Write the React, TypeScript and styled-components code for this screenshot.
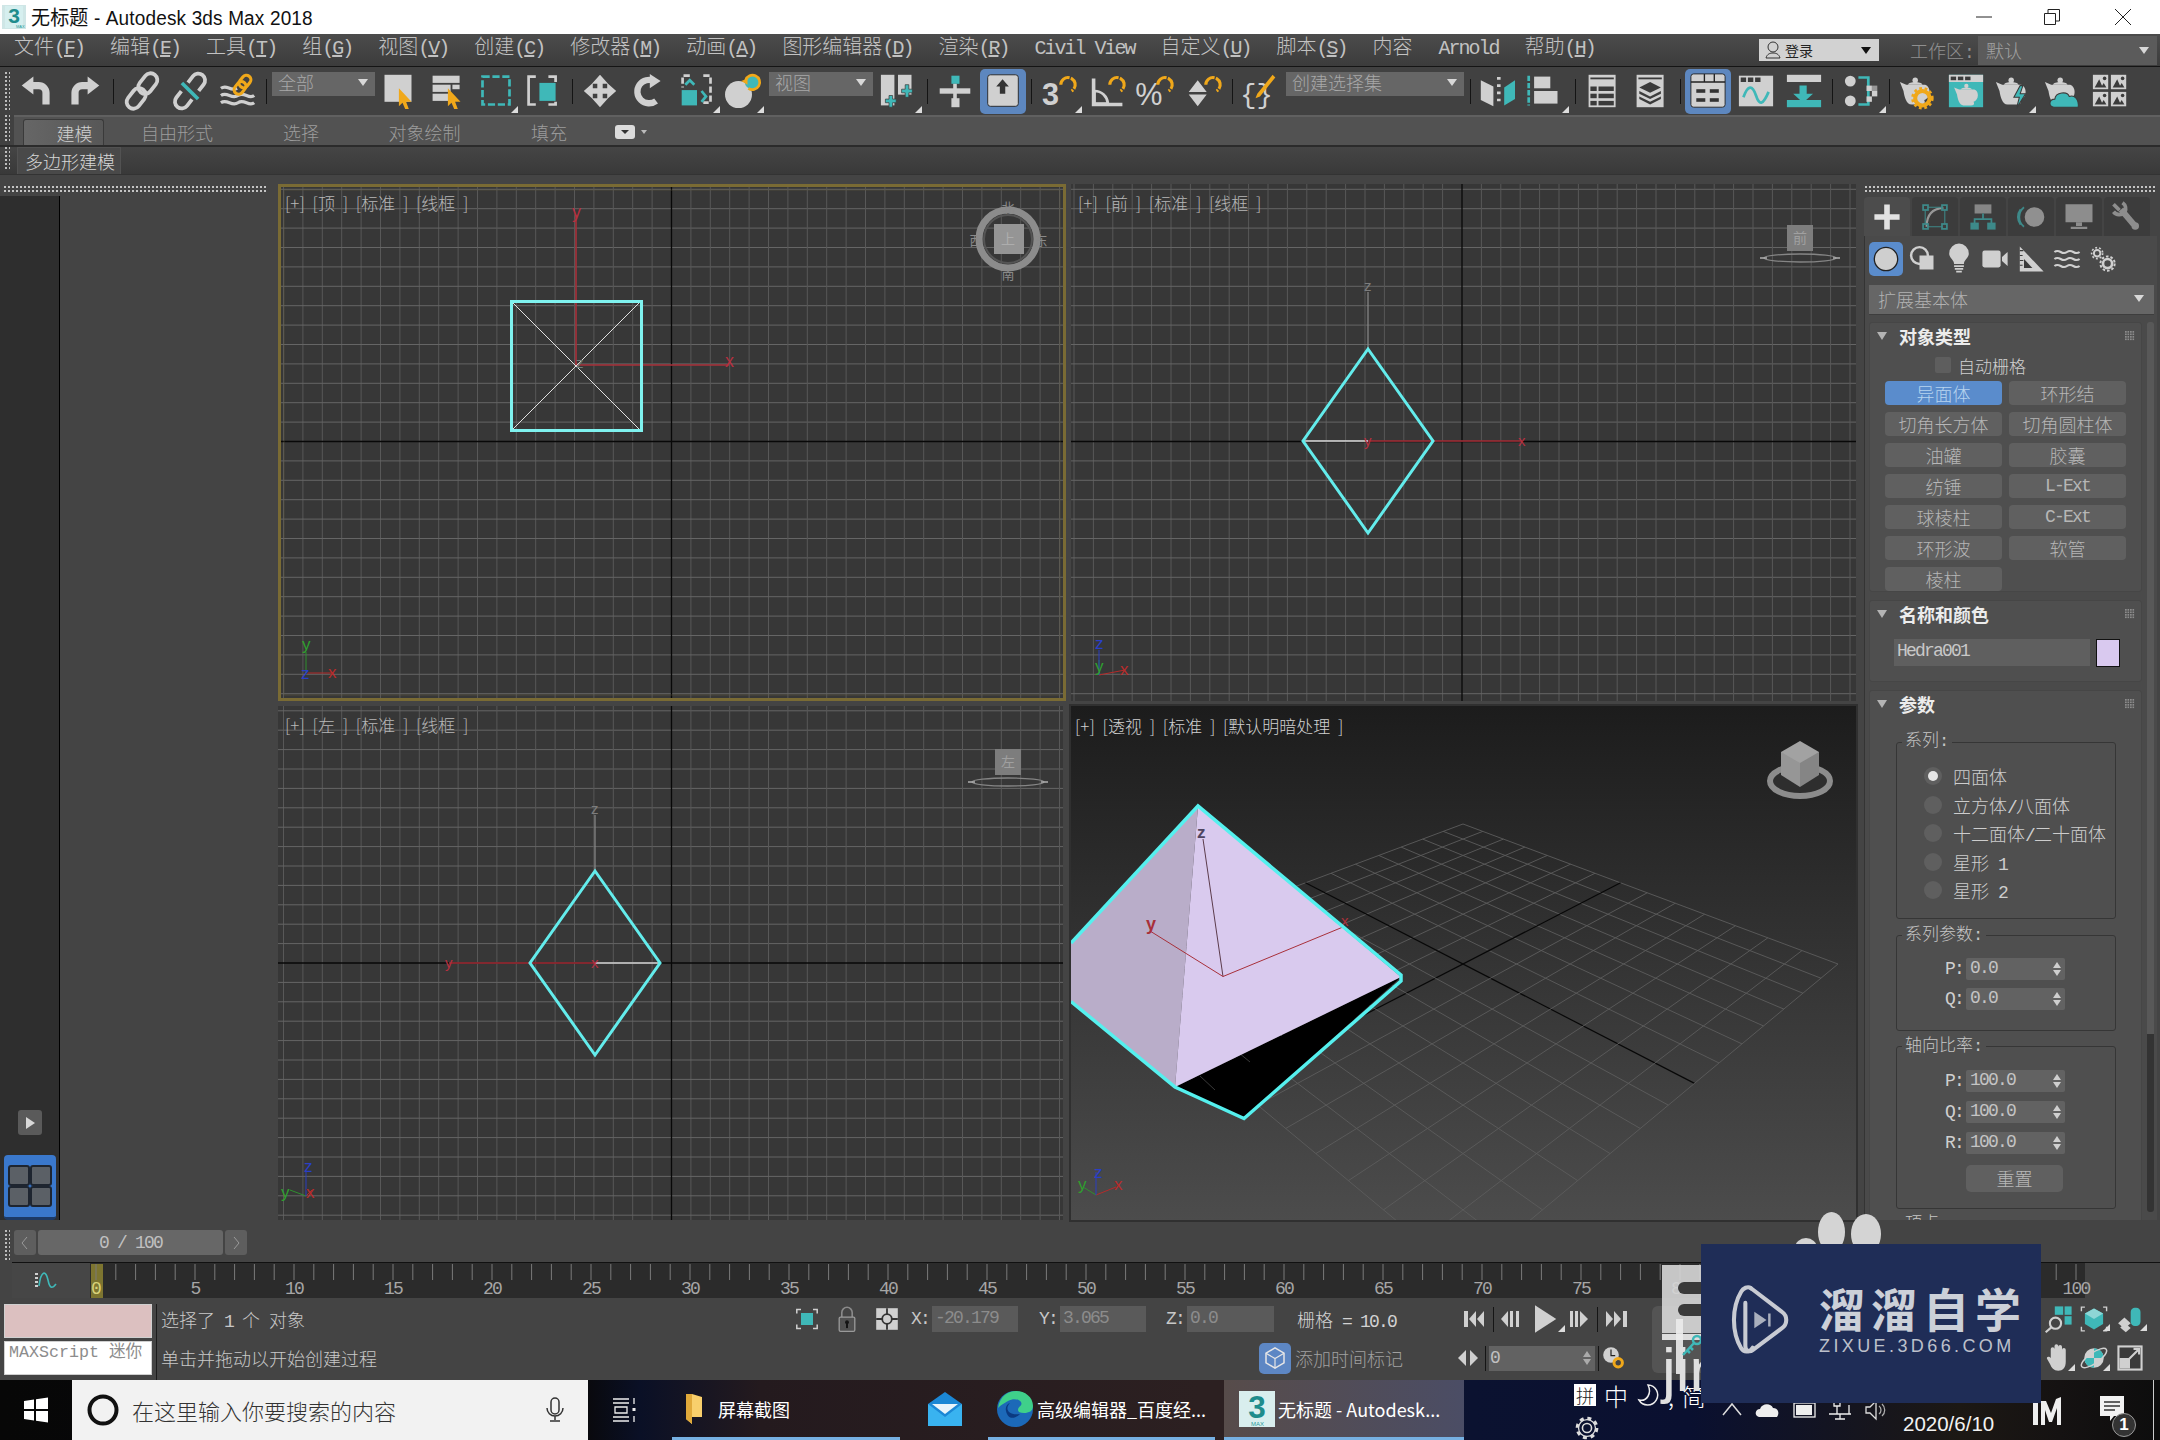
import React from 'react';
import styled, { createGlobalStyle } from 'styled-components';

const MONO = `"Liberation Mono","Noto Sans CJK SC",monospace`;
const CJK = `"Noto Sans CJK SC","Liberation Sans",sans-serif`;
const L = '#d0d0d0';
const T = '#3fb8b8';
const O = '#f0a81a';
const D = '#3b3b3b';

const Global = createGlobalStyle`
  html, body { margin: 0; padding: 0; background: #444; }
  body { font-family: ${MONO}; width: 2160px; height: 1440px; overflow: hidden; }
  * { box-sizing: border-box; }
  svg { overflow: visible; display: block; }
`;

const App_ = styled.div`position: relative; width: 2160px; height: 1440px; display: flex; flex-direction: column; background: #444; overflow: hidden;`;
const Lat = styled.span`font-family: "Liberation Mono", monospace; letter-spacing: -.1em; white-space: pre;`;

/* ---------- title ---------- */
const TitleBar = styled.header`height: 34px; background: #fff; display: flex; align-items: center; padding-left: 2px;`;
const TitleText = styled.div`margin: -3px 0 0 5px; font: 19px ${`"Liberation Sans","Noto Sans CJK SC",sans-serif`}; letter-spacing: .15px; color: #111; flex: 1; transform: scaleY(1.08);`;
const WinBtn = styled.div<{ $w: number }>`width: ${p => p.$w}px; display: flex; justify-content: center;`;
const WinBtns = styled.div`display: flex;`;

/* ---------- menu ---------- */
const MenuBar = styled.nav`height: 33px; border-bottom: 1px solid #151515; background: linear-gradient(#4c4c4c, #3c3c3c); display: flex; align-items: center; padding-left: 14px; gap: 26px; font-size: 20px; color: #c2c2c2;`;
const MenuItem = styled.span`white-space: nowrap; font-weight: 300; line-height: 30px; margin-top: -3px;`;
const MenuRight = styled.div`margin-left: auto; display: flex; align-items: center; height: 32px; padding-right: 3px;`;
const Login = styled.div`width: 120px; height: 22px; background: #d2d2d2; display: flex; align-items: center; padding: 0 8px 0 4px; gap: 2px; font: 14px ${CJK}; color: #222; margin-right: 31px;`;
const Arrow = styled.i<{ $c?: string; $s?: number }>`display: block; width: 0; height: 0; margin-left: auto; border-left: ${p => p.$s ?? 5}px solid transparent; border-right: ${p => p.$s ?? 5}px solid transparent; border-top: ${p => (p.$s ?? 5) * 1.4}px solid ${p => p.$c ?? '#d8d8d8'};`;
const WsLabel = styled.span`font-size: 18px; font-weight: 300; color: #8f8f8f; margin-right: 5px; white-space: nowrap;`;
const WsBox = styled.div`width: 179px; height: 29px; background: #5b5b5b; display: flex; align-items: center; padding: 0 8px; font-size: 18px; font-weight: 300; color: #a2a2a2;`;

/* ---------- toolbar ---------- */
const Toolbar = styled.div`height: 48px; background: #414141; display: flex; align-items: center; position: relative;`;
const VGrip = styled.div<{ $h?: number }>`width: 5px; flex: 0 0 5px; height: ${p => p.$h ?? 38}px; margin: 0 4px 0 5px; background-image: radial-gradient(circle at 1px 1px, #bdbdbd 1px, transparent 1.3px); background-size: 4px 4px;`;
const Tool = styled.div<{ $w: number }>`position: relative; flex: 0 0 ${p => p.$w}px; width: ${p => p.$w}px; height: 48px; display: flex; align-items: center; justify-content: center;`;
const ActiveFrame = styled.div`width: 46px; height: 45px; background: #5d87bf; border-radius: 5px; display: flex; align-items: center; justify-content: center;`;
const Fly = styled.i`position: absolute; right: 1px; bottom: 2px; width: 0; height: 0; border-bottom: 7px solid #dcdcdc; border-left: 7px solid transparent;`;
const TSep = styled.div<{ $w: number }>`flex: 0 0 ${p => p.$w}px; width: ${p => p.$w}px; display: flex; justify-content: center; &::after { content: ''; width: 1px; height: 25px; background: #141414; }`;
const Drop = styled.div<{ $w: number; $ml?: number }>`flex: 0 0 ${p => p.$w}px; width: ${p => p.$w}px; margin-left: ${p => p.$ml ?? 0}px; height: 24px; align-self: flex-start; margin-top: 5px; background: #666; display: flex; align-items: center; padding: 0 7px 4px 6px; color: #a8a8a8; font-size: 18px; font-weight: 300;`;

/* ---------- ribbon ---------- */
const Ribbon = styled.div`height: 32px; display: flex; background: #414141; border-bottom: 2px solid #2b2b2b;`;
const RibbonTabs = styled.div`flex: 1; height: 30px; background: #525252; border-top: 2px solid #606060; display: flex; position: relative; padding-left: 9px; font-size: 18px; color: #9c9c9c; font-weight: 300;`;
const RTab = styled.div<{ $w: number; $active?: boolean }>`flex: 0 0 ${p => p.$w}px; height: 26px; margin-top: 2px; display: flex; align-items: center; justify-content: center; gap: 6px; ${p => p.$active ? 'background: linear-gradient(90deg,#666,#575757); border-radius: 3px 3px 0 0; color:#cfcfcf; border:1px solid #3a3a3a; border-bottom:0; padding-left: 22px;' : ''}`;
const SubRibbon = styled.div`height: 28px; display: flex; background: linear-gradient(#454545, #393939); border-bottom: 1px solid #333;`;
const SubTab = styled.div`width: 104px; margin-left: 3px; height: 27px; background: #494949; border: 1px solid #525252; border-bottom: 0; color: #d6d6d6; font-size: 18px; font-weight: 300; display: flex; align-items: center; padding-left: 7px; white-space: nowrap;`;

/* ---------- middle ---------- */
const Middle = styled.main`height: 1050px; display: flex; background: #444;`;
const LeftCol = styled.div`width: 278px; flex: 0 0 278px; padding-top: 11px; display: flex; flex-direction: column;`;
const HGrip = styled.div<{ $ml: number; $w: number }>`margin-left: ${p => p.$ml}px; width: ${p => p.$w}px; height: 6px; flex: 0 0 6px; background-image: radial-gradient(circle at 1px 1px, #c4c4c4 1px, transparent 1.3px); background-size: 4px 4px;`;
const Strip = styled.div`margin-top: 4px; width: 60px; flex: 1; margin-bottom: 5px; background: #2e2e2e; border-right: 1px solid #000; display: flex; flex-direction: column; align-items: center; justify-content: flex-end;`;
const PlayBtn = styled.div`width: 24px; height: 25px; background: #5a5a5a; border-radius: 3px; display: flex; align-items: center; justify-content: center; margin-bottom: 20px;`;
const LayoutBtn = styled.div`width: 52px; height: 65px; border-radius: 4px; background: #3a78cc; border-bottom: 3px solid #1d3a66; display: flex; align-items: center; justify-content: center;`;

const VGrid = styled.div`width: 1582px; flex: 0 0 1582px; padding-top: 9px; display: grid; grid-template-columns: 788px 785px; grid-template-rows: 517px 514px; column-gap: 5px; row-gap: 5px;`;
const ViewBox = styled.section<{ $bg?: string; $mr?: number; $edge?: boolean }>`position: relative; overflow: hidden; margin-right: ${p => p.$mr ?? 0}px; background: ${p => p.$bg ?? '#373737'}; ${p => p.$edge ? 'outline: 2px solid #303030;' : ''}`;
const ViewLabel = styled.div<{ $b?: boolean }>`position: absolute; left: ${p => p.$b ? 4 : 7}px; top: ${p => p.$b ? 7 : 6}px; font: 300 17px ${CJK}; color: ${p => p.$b ? '#d0d0d0' : '#b8b8b8'}; white-space: pre; word-spacing: 4px;`;
const VSvg = styled.svg`position: absolute; inset: 0; width: 100%; height: 100%; overflow: hidden;`;

/* ---------- command panel ---------- */
const Panel = styled.aside`width: 300px; flex: 0 0 300px; padding-top: 11px; display: flex; flex-direction: column;`;
const PTabs = styled.div`margin: 5px 0 0 4px; display: flex; gap: 2px; height: 39px;`;
const PTab = styled.div<{ $active?: boolean }>`width: 46px; height: 39px; border-radius: 4px 4px 0 0; background: ${p => p.$active ? '#4c4c4c' : '#3c3c3c'}; display: flex; align-items: center; justify-content: center; svg { opacity: ${p => p.$active ? 1 : .62}; }`;
const PBody = styled.div`margin-left: 4px; width: 293px; height: 984px; background: #4a4a4a; border-left: 1px solid #343434; padding-left: 4px; overflow: hidden; display: flex; flex-direction: column;`;
const SubIcons = styled.div`height: 46px; flex: 0 0 46px; display: flex; align-items: center; padding-bottom: 1px;`;
const SubIcon = styled.div<{ $active?: boolean }>`width: 36px; height: 34px; flex: 0 0 36px; display: flex; align-items: center; justify-content: center; ${p => p.$active ? 'background:#5a8ccc;border-radius:5px;width:34px;flex:0 0 34px;margin-right:2px;' : ''}`;
const Combo = styled.div`width: 285px; height: 30px; margin-top: 3px; flex: 0 0 30px; background: #666; display: flex; align-items: center; padding: 0 10px 2px 9px; color: #b2b2b2; font-size: 18px; font-weight: 300; border-bottom: 1px solid #3e3e3e;`;
const Scroller = styled.div`margin-top: 7px; flex: 1; display: flex; overflow: hidden;`;
const Rollouts = styled.div`width: 273px; flex: 0 0 273px; display: flex; flex-direction: column; gap: 8px;`;
const Track = styled.div`margin-left: 5px; width: 7px; height: 890px; border-radius: 3px; background: linear-gradient(#585858 0, #585858 80%, #333 80%, #333 100%);`;
const Rollout = styled.div<{ $pb: number }>`background: #4f4f4f; border: 1px solid #464646; border-radius: 3px; padding-bottom: ${p => p.$pb}px;`;
const RollHead = styled.div`height: 26px; display: flex; align-items: center; padding: 0 6px 0 7px; color: #ececec; font-size: 18px; font-weight: 700;`;
const RollTri = styled.i`width: 0; height: 0; border-left: 5px solid transparent; border-right: 5px solid transparent; border-top: 8px solid #b4b4b4; margin-right: 12px;`;
const RollDots = styled.i`margin-left: auto; width: 10px; height: 10px; background-image: radial-gradient(circle at 1px 1px, #8c8c8c .9px, transparent 1.1px); background-size: 2.5px 2.5px;`;
const AutoRow = styled.div`height: 20px; margin: 6px 0 6px 65px; display: flex; align-items: center; gap: 7px; font-size: 17px; font-weight: 300; color: #cfcfcf;`;
const CheckBox = styled.i`width: 16px; height: 16px; border-radius: 2px; background: #5e5e5e;`;
const BtnGrid = styled.div`display: grid; grid-template-columns: 117px 117px; gap: 7px; padding-left: 15px;`;
const PBtn = styled.div<{ $on?: boolean }>`height: 24px; border-radius: 4px; background: ${p => p.$on ? '#5a8ccc' : '#606060'}; color: ${p => p.$on ? '#b7d4ef' : '#b6b6b6'}; display: flex; align-items: center; justify-content: center; font-size: 18px; font-weight: 300; white-space: nowrap;`;
const NameRow = styled.div`display: flex; padding: 12px 0 0 24px; gap: 6px;`;
const NameInput = styled.div`width: 196px; height: 27px; background: #5f5f5f; color: #c8c8c8; font-size: 18px; letter-spacing: -1.8px; padding-left: 3px; line-height: 25px;`;
const Swatch = styled.div`width: 24px; height: 28px; background: #d9c9ef; border: 1px solid #111;`;
const Group = styled.fieldset<{ $mt: number; $pt: number; $pb: number }>`margin: ${p => p.$mt}px 0 0 26px; width: 220px; padding: ${p => p.$pt}px 0 ${p => p.$pb}px 0; border: 1px solid #363636; border-radius: 3px; min-width: 0;`;
const Legend = styled.legend`margin-left: 5px; padding: 0 3px; height: 20px; line-height: 20px; font-size: 17px; font-weight: 300; color: #c6c6c6; white-space: nowrap;`;
const RadioRow = styled.div`height: 28.5px; display: flex; align-items: center; padding-left: 27px; font-size: 18px; font-weight: 300; color: #cdcdcd; gap: 11px; white-space: nowrap;`;
const RadioLabel = styled.span`white-space: pre;`;
const Radio = styled.i<{ $on?: boolean }>`width: 18px; height: 18px; border-radius: 50%; background: #5f5f5f; display: flex; align-items: center; justify-content: center; flex: 0 0 18px; &::after { content: ''; width: 10px; height: 10px; border-radius: 50%; background: ${p => p.$on ? '#e6e6e6' : 'transparent'}; }`;
const SpinRow = styled.div<{ $mt?: number }>`height: 22px; margin-top: ${p => p.$mt ?? 0}px; display: flex; align-items: center; padding-left: 48px;`;
const SpinLabel = styled.span`width: 21px; font-size: 18px; letter-spacing: -1.8px; color: #cfcfcf;`;
const Spinner = styled.div`width: 99px; height: 22px; background: #626262; border-radius: 2px; color: #c4c4c4; font-size: 18px; letter-spacing: -1.8px; display: flex; align-items: center; padding: 0 4px 2px 4px;`;
const SpinArrows = styled.span`margin-left: auto; display: flex; flex-direction: column; gap: 2px; padding-top: 2px;`;
const Up = styled.i<{ $c?: string }>`display: block; width: 0; height: 0; border-left: 4px solid transparent; border-right: 4px solid transparent; border-bottom: 6px solid ${p => p.$c ?? '#cfcfcf'};`;
const Down = styled.i<{ $c?: string }>`display: block; width: 0; height: 0; border-left: 4px solid transparent; border-right: 4px solid transparent; border-top: 6px solid ${p => p.$c ?? '#cfcfcf'};`;
const ResetBtn = styled.div`margin: 11px 0 0 69px; width: 97px; height: 27px; border-radius: 5px; background: #606060; color: #b8b8b8; display: flex; align-items: center; justify-content: center; font-size: 18px; font-weight: 300;`;

/* ---------- time ---------- */
const TimeRow = styled.div`height: 37px; display: flex; align-items: flex-start; padding-top: 5px;`;
const TBtn = styled.div`width: 22px; height: 25px; background: #5e5e5e; border-radius: 3px; display: flex; align-items: center; justify-content: center;`;
const TField = styled.div`width: 185px; height: 25px; margin: 0 2px 0 2px; background: #676767; border-radius: 3px; display: flex; align-items: center; justify-content: center; color: #c0c0c0; font-size: 18px; letter-spacing: -1.8px; white-space: pre;`;
const TrackRow = styled.div`height: 36px; display: flex; border-top: 1px solid #111; margin-left: 12px;`;
const TrackLeft = styled.div`width: 78px; flex: 0 0 78px; background: #464646; display: flex; align-items: center; padding-left: 22px;`;
const TrackRuler = styled.div`width: 1995px; flex: 0 0 1995px; background: #2b2b2b; height: 35px; position: relative;`;

/* ---------- status ---------- */
const Status = styled.div`height: 82px; display: flex; background: #444; padding: 6px 0 0 4px;`;
const Prompt = styled.div`width: 148px; height: 71px; display: flex; flex-direction: column; gap: 3px;`;
const PromptPink = styled.div`height: 34px; background: #dcc0c0; border: 1px solid #cfcfcf;`;
const PromptWhite = styled.div`height: 34px; background: #fff; border: 1px solid #cfcfcf; color: #8c8c8c; font-size: 16.67px; line-height: 22px; padding: 0 4px; white-space: nowrap; overflow: hidden;`;
const StatDiv = styled.div`width: 1px; height: 76px; background: #1c1c1c; margin: 0 4px;`;
const StatRows = styled.div`flex: 1; display: flex; flex-direction: column; margin-top: -6px;`;
const StatRow = styled.div<{ $h: number }>`height: ${p => p.$h}px; display: flex; align-items: center; padding-right: 12px;`;
const Msg = styled.div<{ $w: number }>`flex: 0 0 ${p => p.$w}px; font-size: 18px; font-weight: 300; color: #c8c8c8; white-space: pre;`;
const Slot = styled.div<{ $w: number }>`flex: 0 0 ${p => p.$w}px; width: ${p => p.$w}px; display: flex; align-items: center; justify-content: center; position: relative;`;
const CLabel = styled.span<{ $ml?: number }>`flex: 0 0 21px; margin-left: ${p => p.$ml ?? 0}px; font-size: 18px; letter-spacing: -1.8px; color: #c8c8c8;`;
const CField = styled.div<{ $w?: number }>`flex: 0 0 ${p => p.$w ?? 86}px; height: 26px; background: #5a5a5a; color: #8c8c8c; font-size: 18px; letter-spacing: -1.8px; padding: 2px 3px; line-height: 20px;`;
const GridText = styled.div`flex: 0 0 165px; margin-left: 23px; font-size: 18px; font-weight: 300; color: #d2d2d2; white-space: pre;`;
const VBar = styled.i`display: block; width: 1px; height: 25px; background: #151515;`;
const TagIcon = styled.div`flex: 0 0 32px; height: 31px; background: #5d87c4; border-radius: 5px; display: flex; align-items: center; justify-content: center;`;
const TagText = styled.div`flex: 0 0 166px; padding-left: 4px; font-size: 18px; font-weight: 300; color: #a0a0a0; white-space: nowrap;`;
const FrameField = styled.div`flex: 0 0 106px; height: 25px; background: #626262; display: flex; align-items: center; color: #c0c0c0; font-size: 18px; padding: 0 4px 0 1px;`;
const NavSlots = styled.div`margin-left: auto; display: flex;`;

/* ---------- taskbar ---------- */
const Taskbar = styled.footer`height: 60px; display: flex; position: relative; color: #fff; font-family: ${CJK}; background: linear-gradient(90deg,#070707 0,#09090d 588px,#0a1026 640px,#241a1e 760px,#2c2021 1200px,#2c2021 1224px,#0b1230 1470px,#0a1030 1690px,#1c1814 1960px,#151212 2060px,#0d0d0d 2160px);`;
const StartBtn = styled.div`flex: 0 0 72px; display: flex; align-items: center; justify-content: center;`;
const Search = styled.div`flex: 0 0 516px; background: #f2f2f2; display: flex; align-items: center; padding: 0 20px 0 14px; gap: 12px; color: #333; font-size: 22px; font-weight: 300;`;
const SearchText = styled.span`flex: 1; white-space: nowrap;`;
const TaskView = styled.div`flex: 0 0 72px; display: flex; align-items: center; justify-content: center;`;
const TaskTab = styled.div<{ $w: number; $ml?: number; $pl?: number; $on?: boolean }>`flex: 0 0 ${p => p.$w}px; margin-left: ${p => p.$ml ?? 0}px; border-bottom: 3px solid #76b0e2; display: flex; align-items: center; gap: 3px; padding-left: ${p => p.$pl ?? 8}px; font-size: 18px; white-space: nowrap; ${p => p.$on ? 'background: linear-gradient(90deg,#574c4a,#4b4d65);' : ''}`;
const MailSlot = styled.div`flex: 0 0 80px; margin-left: 5px; display: flex; align-items: center; justify-content: center;`;
const Ime = styled.div`position: relative; margin-left: 110px; flex: 0 0 145px; display: flex; flex-direction: column; padding-top: 4px;`;
const ImeTop = styled.div`display: flex; align-items: center; gap: 8px; height: 22px; font-size: 24px; font-weight: 300;`;
const ImePin = styled.span`width: 22px; height: 22px; background: #fff; color: #222; font-size: 18px; line-height: 22px; text-align: center;`;
const ImeGear = styled.div`margin-top: 9px;`;
const TrayIcons = styled.div`flex: 0 0 174px; display: flex; align-items: center; margin-left: -5px;`;
const TrayIcon = styled.div`flex: 0 0 36px; display: flex; justify-content: center;`;
const DateText = styled.div`flex: 0 0 118px; font: 20.5px "Liberation Sans", sans-serif; color: #f2f2f2; padding-top: 32px; margin-left: 9px;`;
const ImLogo = styled.div`flex: 0 0 52px; margin-left: 11px; display: flex; align-items: center; padding-top: 4px;`;
const Notify = styled.div`flex: 0 0 50px; margin-left: 14px; display: flex; align-items: center; position: relative;`;
const NotifyBadge = styled.span`position: absolute; left: 14px; top: 33px; width: 24px; height: 24px; border-radius: 50%; background: #333; border: 1px solid #999; font: bold 17px "Liberation Sans", sans-serif; display: flex; align-items: center; justify-content: center;`;
const EdgeLine = styled.i`position: absolute; right: 6px; top: 0; bottom: 0; width: 1px; background: #ccc;`;

/* ---------- watermark ---------- */
const Mark = styled.div`position: absolute; left: 1701px; top: 1244px; width: 340px; height: 159px; background: #1f2d57; display: flex; align-items: center; padding: 0 0 8px 24px; gap: 24px; z-index: 5;`;
const MarkText = styled.div`display: flex; flex-direction: column; color: #ccd0d8;`;
const MarkCn = styled.div`font: 700 46px/50px ${CJK}; letter-spacing: 6px; white-space: nowrap;`;
const MarkEn = styled.div`font: 18px/24px "Liberation Sans", sans-serif; letter-spacing: 3.4px; margin-top: 2px; color: #bcc0cb;`;
const Ghost = styled.div`position: absolute; left: 1652px; top: 1306px; width: 60px; height: 67px; border-radius: 6px; background: rgba(255,255,255,.09); z-index: 2;`;
const GhostB = styled.div`position: absolute; left: 1662px; top: 1265px; width: 50px; height: 68px; background: rgba(215,215,215,.9); z-index: 3; display: flex; flex-direction: column; justify-content: space-around; align-items: flex-end; padding: 12px 0;`;
const GhostHole = styled.i`display: block; width: 34px; height: 12px; border-radius: 6px 0 0 6px; background: #3a3a3a;`;
const GhostBar = styled.i`position: absolute; left: 1676px; top: 1319px; width: 7px; height: 55px; background: rgba(235,235,235,.9); z-index: 3;`;
const GhostCross = styled.i`position: absolute; left: 1662px; top: 1334px; width: 50px; height: 6px; background: rgba(235,235,235,.9); z-index: 3;`;
const GhostJin = styled.div`position: absolute; left: 1662px; top: 1335px; z-index: 4; font: 300 62px/70px "Liberation Sans", sans-serif; color: #e0e0e0;`;
const GhostKey = styled.div`position: absolute; left: 1680px; top: 1335px; z-index: 4;`;
const Paw = styled.i<{ $x: number; $y: number; $w: number; $h: number }>`position: absolute; left: ${p => p.$x}px; top: ${p => p.$y}px; width: ${p => p.$w}px; height: ${p => p.$h}px; border-radius: 50%; background: #d4d4d4; z-index: 3;`;

/* ---------- icon helpers ---------- */
const Ic: React.FC<{ s?: number; vb?: string; children: React.ReactNode }> = ({ s = 40, vb = '0 0 40 40', children }) => (
  <svg width={s} height={s} viewBox={vb}>{children}</svg>
);
const Cursor = () => <path d="M21 17l14 15h-6l3 8h-4l-3-7-4 4z" fill={O} />;
const Magnet = () => <path d="M22 13a8 8 0 1 1 12 7" fill="none" stroke={O} strokeWidth="3.5" strokeDasharray="14 1.5" />;
const Teapot = ({ c = L }: { c?: string }) => (
  <g fill={c}>
    <path d="M1 10l7 3 20 0c3 0 6 3 6 8s-3 8-6 9c2 4-1 5-3 5H14C8 35 6 26 5 20z" />
    <circle cx="18" cy="8" r="3" />
    <path d="M10 13c1-4 15-4 16 0z" />
  </g>
);
const Win = () => (
  <><rect x="1" y="3" width="38" height="34" fill={L} /><rect x="3" y="5" width="6" height="5" fill={D} /><rect x="11" y="5" width="6" height="5" fill={D} /><rect x="19" y="5" width="6" height="5" fill={D} /></>
);

const ICONS: Record<string, React.ReactNode> = {
  undo: <><path d="M14 14h8a8 8 0 0 1 8 8v13" fill="none" stroke={L} strokeWidth="8" /><path d="M16 4 3 14l13 10z" fill={L} /></>,
  redo: <><path d="M26 14h-8a8 8 0 0 0-8 8v13" fill="none" stroke={L} strokeWidth="8" /><path d="M24 4l13 10-13 10z" fill={L} /></>,
  link: <g transform="rotate(-52 20 20)" fill="none" stroke={L} strokeWidth="4.200"><rect x="-3" y="12.500" width="25" height="15" rx="7.500" /><rect x="18" y="12.500" width="25" height="15" rx="7.500" /></g>,
  unlink: <><g transform="rotate(-52 20 20)" fill="none" stroke={L} strokeWidth="4.200"><path d="M14 12.500H5a7.500 7.500 0 0 0 0 15h9M26 12.500h9a7.500 7.500 0 0 1 0 15h-9" /></g><path d="M11 11l18 18" stroke={T} strokeWidth="4" /></>,
  bind: <><g fill="none" stroke={L} strokeWidth="3.5"><path d="M1 17c7-5 10 4 18 0" /><path d="M1 25c7-5 12 5 19 0s12 5 18 0" /><path d="M1 33c7-5 12 5 19 0s12 5 18 0" /></g><g transform="rotate(-52 25 13)" fill="none" stroke={O} strokeWidth="3.5"><rect x="13" y="8" width="15" height="10" rx="5" /><rect x="22" y="8" width="15" height="10" rx="5" /></g></>,
  select: <><rect x="5" y="2" width="30" height="30" fill={L} /><Cursor /></>,
  byname: <><rect x="4" y="3" width="30" height="8" fill={L} /><rect x="4" y="13" width="20" height="8" fill={L} /><rect x="4" y="23" width="20" height="8" fill={L} /><rect x="26" y="13" width="8" height="5" fill={L} /><Cursor /></>,
  region: <rect x="5" y="4" width="30" height="31" fill="none" stroke={T} strokeWidth="3" strokeDasharray="8 3" />,
  window: <><path d="M12 4H4v31h8M26 4h8v6M26 35h8v-3" fill="none" stroke={L} strokeWidth="3" /><rect x="16" y="11" width="18" height="20" fill={T} /></>,
  move: <path d="M17 11h6v6h6v6h-6v6h-6v-6h-6v-6h6z M20 2l9 10H11z M20 38l-9-10h18z M2 20l10-9v18z M38 20l-10 9V11z" fill={L} />,
  rotate: <><path d="M29 31A13 13 0 1 1 27 9" fill="none" stroke={L} strokeWidth="7" /><path d="M22 1l12 8-12 8z" fill={L} /></>,
  scale: <><path d="M12 3H4v13M27 3h8v30h-8" fill="none" stroke={L} strokeWidth="3" strokeDasharray="7 3" /><rect x="3" y="19" width="17" height="17" fill={T} /><path d="M7 13l5-5 5 5M25 20l5 6-5 6" fill="none" stroke={T} strokeWidth="3" /></>,
  place: <><circle cx="15" cy="24" r="15" fill={L} /><circle cx="30" cy="10" r="8" fill={T} /><path d="M23 8a8 8 0 1 1 3 9" fill="none" stroke={O} strokeWidth="3" /><path d="M18 9l7-3v7z" fill={O} /></>,
  pivot: <><rect x="1" y="2" width="15" height="34" fill={L} /><rect x="20" y="2" width="15" height="22" fill={L} /><path d="M6 29h4v-4h4v4h4v4h-4v5h-4v-5H6z" fill={T} stroke={D} strokeWidth=".8" /><path d="M24 18h4v-5h4v5h4v4h-4v5h-4v-5h-4z" fill={T} stroke={D} strokeWidth=".8" /></>,
  manip: <><rect x="16" y="3" width="9" height="9" fill={T} /><rect x="18" y="12" width="4" height="25" fill={L} /><rect x="3" y="17" width="34" height="6" fill={L} /><rect x="16" y="28" width="9" height="10" fill={L} /></>,
  key: <><rect x="3" y="2" width="34" height="35" rx="3" fill={L} stroke="#222" strokeWidth="1" /><path d="M19.5 7l7 8h-4v8h-6v-8h-4z" fill="#333" /></>,
  snap3: <><text x="1" y="36" fontFamily="Liberation Sans" fontWeight="700" fontSize="34" fill={L}>3</text><Magnet /></>,
  angle: <><path d="M4 6v29h32" fill="none" stroke={L} strokeWidth="4" /><path d="M5 20c8 0 14 6 15 14h-15z" fill="none" stroke={L} strokeWidth="3" /><Magnet /></>,
  pct: <><text x="-3" y="35" fontFamily="Liberation Sans" fontSize="34" fill={L}>%</text><Magnet /></>,
  spin: <><path d="M13 8l10 13H3zM13 37L3 24h20z" fill={L} /><Magnet /></>,
  edit: <><text x="-2" y="33" fontFamily="Liberation Mono" fontSize="30" fill={L}>{'{}'}</text><path d="M34 2l3 3-17 21-5 2 2-5z" fill={O} /></>,
  mirror: <><path d="M2 8l14 7v22L2 30z" fill={L} /><path d="M20 6h4M20 14h4M20 22h4M20 30h4" stroke={L} strokeWidth="3" /><path d="M40 8l-12 8v20l12-7z" fill={T} /></>,
  align: <><path d="M3 3v33" stroke={T} strokeWidth="3" strokeDasharray="6 2" /><rect x="9" y="4" width="18" height="13" fill={L} /><rect x="9" y="20" width="26" height="14" fill={L} /></>,
  layer: <><rect x="4" y="2" width="30" height="36" fill={L} /><g fill={D}><rect x="6" y="5" width="26" height="2" /><rect x="6" y="15" width="7" height="5" /><rect x="15" y="15" width="17" height="5" /><rect x="6" y="23" width="7" height="5" /><rect x="15" y="23" width="17" height="5" /><rect x="6" y="31" width="7" height="5" /><rect x="15" y="31" width="17" height="5" /></g></>,
  scene: <><rect x="4" y="2" width="30" height="36" fill={L} /><rect x="6" y="5" width="26" height="2" fill={D} /><g fill={D}><path d="M19 10l12 6-12 6-12-6z" /><path d="M7 20l12 6 12-6v3l-12 6-12-6z" /><path d="M7 26l12 6 12-6v3l-12 6-12-6z" /></g></>,
  ribbon: <><rect x="1" y="1" width="38" height="37" rx="3" fill={L} stroke="#222" /><path d="M1 10h38M16 1v9M27 1v9" stroke="#222" strokeWidth="1.5" fill="none" /><g fill="#333"><rect x="7" y="18" width="10" height="4" /><rect x="22" y="18" width="10" height="4" /><rect x="7" y="28" width="10" height="4" /><rect x="22" y="28" width="10" height="4" /></g></>,
  curve: <><Win /><path d="M6 27c5-14 10-14 14-2s8 10 14-4" fill="none" stroke={T} strokeWidth="3" /></>,
  sched: <><rect x="1" y="2" width="38" height="8" fill={L} /><path d="M15 14h8v9h7L19 33 8 23h7z" fill={T} /><rect x="1" y="30" width="38" height="8" fill={T} /></>,
  material: <><circle cx="7" cy="9" r="6" fill={L} /><circle cx="7" cy="31" r="6" fill={L} /><path d="M16 5h11v14M16 35h11V20" stroke={T} strokeWidth="3" fill="none" /><g fill={L}><rect x="25" y="14" width="6" height="6" /><rect x="31" y="20" width="6" height="6" /><rect x="25" y="26" width="6" height="6" /><rect x="31" y="14" width="6" height="6" opacity=".6" /></g></>,
  rsetup: <><Teapot /><circle cx="26" cy="28" r="8" fill="none" stroke={O} strokeWidth="4.5" /><circle cx="26" cy="28" r="11" fill="none" stroke={O} strokeWidth="3" strokeDasharray="3 3" /></>,
  rframe: <><rect x="1" y="2" width="38" height="36" fill={T} /><rect x="1" y="2" width="38" height="8" fill={L} /><rect x="3" y="4" width="6" height="4" fill={D} /><rect x="11" y="4" width="6" height="4" fill={D} /><rect x="19" y="4" width="6" height="4" fill={D} /><g transform="translate(6 8) scale(.8)"><Teapot /></g></>,
  render: <><Teapot /><path d="M28 14l-7 13h6l-3 12 10-16h-6l3-9z" fill={T} stroke={D} strokeWidth="1.2" /></>,
  cloud: <><Teapot /><path d="M11 38c-6 0-6-9 1-9 1-8 14-9 16-3 6-2 11 3 10 12z" fill={T} stroke={D} strokeWidth="1.2" /></>,
  gallery: <>{[[1, 2], [21, 2], [1, 21], [21, 21]].map(([x, y], i) => <g key={i}><rect x={x} y={y} width="17" height="16" fill={L} /><path d={`M${x + 2} ${y + 14}l5-9 4 9z M${x + 9} ${y + 14}l3-5 3 5z`} fill={D} /><circle cx={x + 13} cy={y + 4} r="2" fill={D} /></g>)}</>,
};

type Item = { k: 't'; i: string; w: number; fly?: boolean; on?: boolean } | { k: 's'; w: number } | { k: 'd'; w: number; ml?: number; text: string };
const TOOLS: Item[] = [
  { k: 't', i: 'undo', w: 46 }, { k: 't', i: 'redo', w: 48 }, { k: 's', w: 10 },
  { k: 't', i: 'link', w: 48 }, { k: 't', i: 'unlink', w: 48 }, { k: 't', i: 'bind', w: 48 }, { k: 's', w: 8 },
  { k: 'd', w: 103, ml: 2, text: '全部' },
  { k: 't', i: 'select', w: 46 }, { k: 't', i: 'byname', w: 52 }, { k: 't', i: 'region', w: 46, fly: true }, { k: 't', i: 'window', w: 48 }, { k: 's', w: 10 },
  { k: 't', i: 'move', w: 46 }, { k: 't', i: 'rotate', w: 50 }, { k: 't', i: 'scale', w: 48, fly: true }, { k: 't', i: 'place', w: 44, fly: true },
  { k: 'd', w: 104, ml: 4, text: '视图' },
  { k: 't', i: 'pivot', w: 50, fly: true }, { k: 's', w: 8 }, { k: 't', i: 'manip', w: 48 }, { k: 't', i: 'key', w: 48, on: true }, { k: 's', w: 8 },
  { k: 't', i: 'snap3', w: 48, fly: true }, { k: 't', i: 'angle', w: 50 }, { k: 't', i: 'pct', w: 46 }, { k: 't', i: 'spin', w: 50 }, { k: 's', w: 6 },
  { k: 't', i: 'edit', w: 50 }, { k: 'd', w: 178, ml: 1, text: '创建选择集' }, { k: 's', w: 12 },
  { k: 't', i: 'mirror', w: 42 }, { k: 't', i: 'align', w: 52, fly: true }, { k: 's', w: 10 },
  { k: 't', i: 'layer', w: 46 }, { k: 't', i: 'scene', w: 50 }, { k: 's', w: 8 },
  { k: 't', i: 'ribbon', w: 48, on: true }, { k: 't', i: 'curve', w: 48 }, { k: 't', i: 'sched', w: 48 }, { k: 's', w: 8 },
  { k: 't', i: 'material', w: 51, fly: true }, { k: 's', w: 4 },
  { k: 't', i: 'rsetup', w: 52 }, { k: 't', i: 'rframe', w: 46 }, { k: 't', i: 'render', w: 48, fly: true }, { k: 't', i: 'cloud', w: 50 }, { k: 't', i: 'gallery', w: 46 },
];

const MENUS: [string, string][] = [['文件', 'F'], ['编辑', 'E'], ['工具', 'T'], ['组', 'G'], ['视图', 'V'], ['创建', 'C'], ['修改器', 'M'], ['动画', 'A'], ['图形编辑器', 'D'], ['渲染', 'R']];
const MENUS2: [string, string][] = [['自定义', 'U'], ['脚本', 'S']];

/* ---------- viewports ---------- */
const Grid2D: React.FC<{ x0: number; y0: number; x1: number; y1: number; ax: number; ay: number }> = ({ x0, y0, x1, y1, ax, ay }) => {
  const step = 19.4;
  const minor: React.ReactNode[] = [];
  const axes: React.ReactNode[] = [];
  for (let k = -45; k <= 45; k++) {
    const x = ax + k * step;
    if (x > x0 && x < x1) {
      if (k === 0) axes.push(<line key="vx" x1={x} x2={x} y1={y0} y2={y1} stroke="#080808" strokeWidth={1.3} />);
      else minor.push(<line key={'v' + k} x1={x} x2={x} y1={y0} y2={y1} stroke="#585858" />);
    }
    const y = ay + k * step;
    if (y > y0 && y < y1) {
      if (k === 0) axes.push(<line key="hx" y1={y} y2={y} x1={x0} x2={x1} stroke="#080808" strokeWidth={1.5} />);
      else minor.push(<line key={'h' + k} y1={y} y2={y} x1={x0} x2={x1} stroke="#656565" />);
    }
  }
  return <g>{minor}{axes}</g>;
};
const Tripod: React.FC<{ o: [number, number]; z?: [number, number]; y?: [number, number]; x?: [number, number]; lz: [number, number]; ly: [number, number]; lx: [number, number] }> = ({ o, z, y, x, lz, ly, lx }) => (
  <g fontFamily="Liberation Sans" fontSize="17">
    {y && <line x1={o[0]} y1={o[1]} x2={y[0]} y2={y[1]} stroke="#2f8f2f" />}
    {x && <line x1={o[0]} y1={o[1]} x2={x[0]} y2={x[1]} stroke="#b52a2a" />}
    {z && <line x1={o[0]} y1={o[1]} x2={z[0]} y2={z[1]} stroke="#2a3fc0" />}
    <text x={ly[0]} y={ly[1]} fill="#2f9f2f">y</text>
    <text x={lx[0]} y={lx[1]} fill="#b82c2c">x</text>
    <text x={lz[0]} y={lz[1]} fill="#2a3fc8">z</text>
  </g>
);
const Cube: React.FC<{ cx: number; cy: number; t: string }> = ({ cx, cy, t }) => (
  <g>
    <rect x={cx - 13} y={cy - 13} width="26" height="26" fill="#7d7d7d" />
    <text x={cx} y={cy + 5} textAnchor="middle" fontFamily="Noto Sans CJK SC" fontSize="14" fill="#a0a0a0">{t}</text>
    <ellipse cx={cx} cy={cy + 20} rx="36" ry="4" fill="none" stroke="#858585" strokeWidth="1.3" />
    <path d={`M${cx - 40} ${cy + 20}h7M${cx + 33} ${cy + 20}h7`} stroke="#b0b0b0" strokeWidth="1.5" />
  </g>
);
const VTop = () => (
  <VSvg viewBox="278 184 788 517">
    <Grid2D x0={278} y0={184} x1={1066} y1={701} ax={671.5} ay={441.5} />
    <path d="M576 215v150M576 365h153" stroke="#a8303a" strokeWidth="1.6" fill="none" />
    <text x="572" y="218" fontSize="18" fontFamily="Liberation Sans" fill="#b53040">y</text>
    <text x="725" y="367" fontSize="18" fontFamily="Liberation Sans" fill="#b53040">x</text>
    <path d="M511 301 641 431M641 301 511 431" stroke="#e0e0e0" strokeWidth="1" />
    <rect x="511.5" y="301.5" width="130" height="129" fill="none" stroke="#7ff2ef" strokeWidth="3" />
    <text x="576" y="368" fontSize="15" fontFamily="Liberation Sans" fill="#6f7f7f">z</text>
    <circle cx="1008" cy="239" r="29" fill="none" stroke="#8c8c8c" strokeWidth="7" />
    <circle cx="1008" cy="239" r="24" fill="none" stroke="#555" strokeWidth="2" />
    <rect x="994" y="224" width="30" height="30" fill="#959595" />
    <text x="1008" y="244" textAnchor="middle" fontFamily="Noto Sans CJK SC" fontSize="14" fill="#adadad">上</text>
    <g fontFamily="Noto Sans CJK SC" fontSize="13" fill="#8a8a8a" textAnchor="middle">
      <text x="1008" y="212">北</text><text x="1008" y="279">南</text><text x="976" y="245">西</text><text x="1041" y="245">东</text>
    </g>
    <Tripod o={[306, 673]} y={[306, 652]} x={[334, 673]} ly={[302, 650]} lx={[328, 678]} lz={[301, 679]} />
    <rect x="279.5" y="185.5" width="785" height="514" fill="none" stroke="#7a6b34" strokeWidth="3" />
    <rect x="284" y="190" width="776" height="505" fill="none" stroke="#6a6240" strokeWidth=".8" opacity=".5" />
  </VSvg>
);
const Kite: React.FC<{ cx: number; cy: number; tail: number; tailDir: number; zTop: number; box: [number, number, number, number] }> = ({ cx, cy, tail, tailDir, zTop, box }) => (
  <VSvg viewBox={box.join(' ')}>
    <Grid2D x0={box[0]} y0={box[1]} x1={box[0] + box[2]} y1={box[1] + box[3]} ax={tailDir > 0 ? 1462 : 671.5} ay={cy === 441 ? 441.5 : 963} />
    <path d={`M${cx} ${cy}H${tail}`} stroke="#a8303a" strokeWidth="1.4" />
    <path d={`M${cx} ${cy}H${cx - tailDir * 65}`} stroke="#e6e6e6" strokeWidth="1.4" />
    <path d={`M${cx} ${zTop}V${cy - 92}`} stroke="#8a8a8a" strokeWidth="1.2" />
    <text x={cx - 4} y={zTop - 1} fontSize="15" fontFamily="Liberation Sans" fill="#7d7d7d">z</text>
    <text x={tail - 4} y={cy + 5} fontSize="15" fontFamily="Liberation Sans" fill="#b53040">{tailDir > 0 ? 'x' : 'y'}</text>
    <text x={cx - 4} y={cy + 5} fontSize="15" fontFamily="Liberation Sans" fill="#b53040">{tailDir > 0 ? 'y' : 'x'}</text>
    <path d={`M${cx} ${cy - 92}L${cx + 65} ${cy}L${cx} ${cy + 92}L${cx - 65} ${cy}Z`} fill="none" stroke="#63ecec" strokeWidth="3" strokeLinejoin="miter" />
  </VSvg>
);
function persp() {
  const P = [[1463, 824], [1838, 964], [1463, 1276], [1088, 964]];
  const [a0, a1, a2, a3] = P;
  const dx1 = a1[0] - a2[0], dx2 = a3[0] - a2[0], sx = a0[0] - a1[0] + a2[0] - a3[0];
  const dy1 = a1[1] - a2[1], dy2 = a3[1] - a2[1], sy = a0[1] - a1[1] + a2[1] - a3[1];
  const det = dx1 * dy2 - dx2 * dy1;
  const g = (sx * dy2 - dx2 * sy) / det, h = (dx1 * sy - sx * dy1) / det;
  const a = a1[0] - a0[0] + g * a1[0], b = a3[0] - a0[0] + h * a3[0], c = a0[0];
  const d = a1[1] - a0[1] + g * a1[1], e = a3[1] - a0[1] + h * a3[1], f = a0[1];
  return (u: number, v: number) => {
    const w = g * u + h * v + 1;
    return [(a * u + b * v + c) / w, (d * u + e * v + f) / w];
  };
}
const VPersp = () => {
  const m = persp();
  const N = 14;
  const lines: React.ReactNode[] = [];
  for (let i = 0; i <= N; i++) {
    const t = i / N;
    const [x1, y1] = m(t, 0), [x2, y2] = m(t, 1), [x3, y3] = m(0, t), [x4, y4] = m(1, t);
    const ax = i === N / 2;
    lines.push(<line key={'a' + i} x1={x1} y1={y1} x2={x2} y2={y2} stroke={ax ? '#080808' : '#5c5c5c'} strokeWidth={ax ? 1.2 : .9} />);
    lines.push(<line key={'b' + i} x1={x3} y1={y3} x2={x4} y2={y4} stroke={ax ? '#080808' : '#5c5c5c'} strokeWidth={ax ? 1.2 : .9} />);
  }
  return (
    <VSvg viewBox="1071 706 785 514">
      <g>{lines}</g>
      <path d="M1175 1087 1244 1118.5 1401 977Z" fill="#000" />
      <path d="M1200 1076 1215 1090M1233 1048 1250 1062M1265 1020 1282 1036M1300 990 1312 1004" stroke="#3a3a3a" />
      <path d="M1198 806 1071 943V1001.5L1175 1087Z" fill="#b9adc9" />
      <path d="M1198 806 1401 977 1175 1087Z" fill="#d9caee" />
      <path d="M1203 839 1223 976.5" fill="none" stroke="#5c3c4c" strokeWidth="1" />
      <path d="M1223 976.5 1151 931.6M1223 976.5 1343 927" fill="none" stroke="#a8303a" strokeWidth="1" />
      <text x="1197" y="838" fontSize="17" fontWeight="700" fontFamily="Liberation Sans" fill="#4f4560">z</text>
      <text x="1146" y="930" fontSize="18" fontWeight="700" fontFamily="Liberation Sans" fill="#a8303a">y</text>
      <text x="1341" y="926" fontSize="15" fontFamily="Liberation Sans" fill="#a8303a">x</text>
      <path d="M1071 943 1198 806 1401 975 1401 981 1244 1118.5 1175 1087 1071 1001.5" fill="none" stroke="#55f0ee" strokeWidth="3.5" />
      <ellipse cx="1800" cy="781" rx="30" ry="15" fill="#2e2e2e" stroke="#8c8c8c" strokeWidth="6" />
      <path d="M1800 741l19 11v12l-19 11-19-11v-12z" fill="#a2a2a2" />
      <path d="M1800 763v24l19-12v-23z" fill="#858585" />
      <path d="M1800 763v24l-19-12v-23z" fill="#969696" />
      <Tripod o={[1096, 1195]} z={[1096, 1172]} y={[1083, 1187]} x={[1116, 1187]} lz={[1094, 1178]} ly={[1078, 1190]} lx={[1114, 1190]} />
    </VSvg>
  );
};

/* ---------- panel data ---------- */
const BTNS: React.ReactNode[] = ['切角长方体', '切角圆柱体', '油罐', '胶囊', '纺锤', <Lat key="l">L-Ext</Lat>, '球棱柱', <Lat key="c">C-Ext</Lat>, '环形波', '软管', '棱柱'];
const RADIOS: React.ReactNode[] = ['四面体', <>立方体<Lat>/</Lat>八面体</>, <>十二面体<Lat>/</Lat>二十面体</>, <>星形<Lat> 1</Lat></>, <>星形<Lat> 2</Lat></>];

const Spin: React.FC<{ l: string; v: string; mt?: number }> = ({ l, v, mt }) => (
  <SpinRow $mt={mt}><SpinLabel>{l}:</SpinLabel><Spinner>{v}<SpinArrows><Up /><Down /></SpinArrows></Spinner></SpinRow>
);

const TabIcons: React.ReactNode[] = [
  <Ic s={28} key="a"><path d="M16 2h8v14h14v8H24v14h-8V24H2v-8h14z" fill="#e2e2e2" /></Ic>,
  <Ic s={28} key="b"><path d="M8 34C8 18 16 8 32 7" stroke={L} strokeWidth="3" fill="none" /><g fill="none" stroke={T} strokeWidth="2.5"><rect x="3" y="3" width="7" height="7" /><rect x="30" y="3" width="7" height="7" /><rect x="3" y="30" width="7" height="7" /><rect x="30" y="30" width="7" height="7" /><path d="M10 6h20M6 10v20M10 34h20M34 10v20" strokeWidth="1.5" /></g></Ic>,
  <Ic s={28} key="c"><rect x="8" y="2" width="24" height="13" fill="#b4b4b4" /><path d="M20 15v8M8 30v-7h24v7" stroke={T} strokeWidth="2.5" fill="none" /><rect x="2" y="28" width="12" height="10" fill={T} /><rect x="26" y="28" width="12" height="10" fill={T} /></Ic>,
  <Ic s={28} key="d"><circle cx="25" cy="20" r="14" fill="#c4c4c4" /><path d="M10 6a18 18 0 0 0 0 28M5 9a18 18 0 0 0 0 22" stroke={T} fill="none" strokeWidth="2.5" /></Ic>,
  <Ic s={30} key="e"><rect x="2" y="3" width="36" height="24" fill="#c0c0c0" /><rect x="16" y="27" width="8" height="5" fill="#c0c0c0" /><rect x="9" y="33" width="22" height="3" fill="#c0c0c0" /></Ic>,
  <Ic s={30} key="f"><path d="M12 10l17 20" stroke="#c0c0c0" strokeWidth="8" /><path d="M2 3l8 8M14 1a10 10 0 0 1 3 13 10 10 0 0 1-15-1" fill="none" stroke="#c0c0c0" strokeWidth="5" /><circle cx="31" cy="32" r="5" fill="#c0c0c0" /></Ic>,
];
const SubIconsArr: React.ReactNode[] = [
  <Ic s={26} key="a"><circle cx="20" cy="20" r="18" fill="#cfcfcf" stroke="#222" strokeWidth="2" /></Ic>,
  <Ic s={28} key="b"><circle cx="15" cy="15" r="12" fill="none" stroke={L} strokeWidth="3.5" /><rect x="15" y="15" width="20" height="20" fill={L} /></Ic>,
  <Ic s={28} key="c"><path d="M13 27c0-6-7-8-7-15a14 14 0 0 1 28 0c0 7-7 9-7 15z" fill={L} /><path d="M13 30h14M14 34h12M16 38h8" stroke={L} strokeWidth="2.5" /></Ic>,
  <Ic s={28} key="d"><rect x="2" y="8" width="26" height="24" rx="3" fill={L} /><path d="M30 17l8-7v20l-8-7z" fill={L} /></Ic>,
  <Ic s={28} key="e"><path d="M4 2l34 36H4z" fill={L} /><path d="M10 20l12 13H10z" fill={D} /><path d="M4 8h5M4 15h4M4 22h5M4 29h4" stroke={D} strokeWidth="1.5" /></Ic>,
  <Ic s={28} key="f"><g fill="none" stroke={L} strokeWidth="3"><path d="M2 10c8-6 10 6 18 0s10 6 18 0" /><path d="M2 20c8-6 10 6 18 0s10 6 18 0" /><path d="M2 30c8-6 10 6 18 0s10 6 18 0" /></g></Ic>,
  <Ic s={26} key="g"><g fill="none" stroke={L}><circle cx="11" cy="11" r="5" strokeWidth="3" /><circle cx="11" cy="11" r="8.500" strokeWidth="2.500" strokeDasharray="3 3" /><circle cx="27" cy="27" r="7" strokeWidth="4" /><circle cx="27" cy="27" r="11" strokeWidth="3" strokeDasharray="4 3" /></g></Ic>,
];

const Ruler = () => {
  const ticks: React.ReactNode[] = [];
  for (let f = 0; f <= 100; f++) {
    const x = 6 + f * 19.8;
    ticks.push(<line key={f} x1={x} x2={x} y1={1} y2={17} stroke="#7a7a7a" />);
    if (f % 5 === 0 && f > 0) ticks.push(<text key={'t' + f} x={x} y={31} textAnchor="middle" fontFamily="Liberation Mono" fontSize="18" letterSpacing="-1.8" fill="#a6a6a6">{f}</text>);
  }
  return (
    <svg width="1995" height="35">
      <rect x="1" y="1" width="12" height="34" fill="#7d7530" />
      {ticks}
      <text x="6.5" y="31" textAnchor="middle" fontFamily="Liberation Mono" fontSize="18" fill="#d8d27a">0</text>
    </svg>
  );
};

const Play: React.FC<{ d: string; s?: number }> = ({ d, s = 24 }) => <Ic s={s} vb="0 0 24 24"><path d={d} fill={L} /></Ic>;

export default function App() {
  return (
    <App_>
      <Global />
      <TitleBar>
        <Ic s={24} vb="0 0 24 24">
          <rect width="24" height="24" fill="#cfe6e6" />
          <rect x="3" y="1" width="18" height="22" fill="#d6efef" />
          <text x="12" y="18" textAnchor="middle" fontFamily="Liberation Sans" fontWeight="700" fontSize="21" fill="#1f8c8c">3</text>
          <text x="14" y="23" fontFamily="Liberation Sans" fontSize="4" fill="#2a9a9a">MAX</text>
        </Ic>
        <TitleText>无标题 - Autodesk 3ds Max 2018</TitleText>
        <WinBtns>
          <WinBtn $w={68}><svg width="16" height="16"><path d="M0 8h16" stroke="#222" /></svg></WinBtn>
          <WinBtn $w={68}><svg width="16" height="16"><path d="M.5 4.500h11v11H.5zM4 4V.5h11.500V12H12" fill="none" stroke="#222" /></svg></WinBtn>
          <WinBtn $w={74}><svg width="16" height="16"><path d="M0 0l16 16M16 0 0 16" stroke="#222" /></svg></WinBtn>
        </WinBtns>
      </TitleBar>

      <MenuBar>
        {MENUS.map(([a, k]) => <MenuItem key={a}>{a}<Lat>(<u>{k}</u>)</Lat></MenuItem>)}
        <MenuItem><Lat>Civil View</Lat></MenuItem>
        {MENUS2.map(([a, k]) => <MenuItem key={a}>{a}<Lat>(<u>{k}</u>)</Lat></MenuItem>)}
        <MenuItem>内容</MenuItem>
        <MenuItem><Lat>Arnold</Lat></MenuItem>
        <MenuItem>帮助<Lat>(<u>H</u>)</Lat></MenuItem>
        <MenuRight>
          <Login>
            <Ic s={20} vb="0 0 20 20"><circle cx="10" cy="7" r="5" fill="none" stroke="#333" /><path d="M3 18c1-4 4-5 7-5s6 1 7 5z" fill="none" stroke="#333" /></Ic>
            登录<Arrow $c="#111" />
          </Login>
          <WsLabel>工作区<Lat>:</Lat></WsLabel>
          <WsBox>默认<Arrow /></WsBox>
        </MenuRight>
      </MenuBar>

      <Toolbar>
        <VGrip />
        {TOOLS.map((t, i) => {
          if (t.k === 's') return <TSep key={i} $w={t.w} />;
          if (t.k === 'd') return <Drop key={i} $w={t.w} $ml={t.ml}>{t.text}<Arrow /></Drop>;
          return (
            <Tool key={i} $w={t.w}>
              {t.on ? <ActiveFrame><Ic s={36}>{ICONS[t.i]}</Ic></ActiveFrame> : <Ic s={36}>{ICONS[t.i]}</Ic>}
              {t.fly && <Fly />}
            </Tool>
          );
        })}
      </Toolbar>

      <Ribbon>
        <VGrip $h={26} />
        <RibbonTabs>
          <RTab $w={81} $active>建模</RTab>
          <RTab $w={146}>自由形式</RTab>
          <RTab $w={102}>选择</RTab>
          <RTab $w={145}>对象绘制</RTab>
          <RTab $w={104}>填充</RTab>
          <RTab $w={60}>
            <Ic s={20} vb="0 0 20 20"><rect y="3" width="20" height="14" rx="3" fill="#dcdcdc" /><path d="M6 8l4 4 4-4z" fill="#333" /></Ic>
            <Arrow $s={3} $c="#bbb" style={{ marginLeft: 0 }} />
          </RTab>
        </RibbonTabs>
      </Ribbon>
      <SubRibbon>
        <VGrip $h={24} />
        <SubTab>多边形建模</SubTab>
      </SubRibbon>

      <Middle>
        <LeftCol>
          <HGrip $ml={4} $w={264} />
          <Strip>
            <PlayBtn><Ic s={14} vb="0 0 14 14"><path d="M3 1l9 6-9 6z" fill="#d8d8d8" /></Ic></PlayBtn>
            <LayoutBtn>
              <Ic s={46} vb="0 0 46 46">
                <g fill="#5b6066" stroke="#1e2530" strokeWidth="2"><rect x="2" y="3" width="20" height="19" rx="2" /><rect x="24" y="3" width="20" height="19" rx="2" /><rect x="2" y="24" width="20" height="19" rx="2" /><rect x="24" y="24" width="20" height="19" rx="2" /></g>
              </Ic>
            </LayoutBtn>
          </Strip>
        </LeftCol>

        <VGrid>
          <ViewBox>
            <VTop />
            <ViewLabel>[+] [顶 ] [标准 ] [线框 ]</ViewLabel>
          </ViewBox>
          <ViewBox>
            <Kite box={[1071, 184, 785, 517]} cx={1368} cy={441} tail={1522} tailDir={1} zTop={292} />
            <VSvg viewBox="1071 184 785 517"><Cube cx={1800} cy={238} t="前" /><Tripod o={[1099, 675]} z={[1099, 650]} y={[1099, 660]} x={[1125, 670]} lz={[1095, 649]} ly={[1095, 672]} lx={[1120, 675]} /></VSvg>
            <ViewLabel>[+] [前 ] [标准 ] [线框 ]</ViewLabel>
          </ViewBox>
          <ViewBox $mr={3}>
            <Kite box={[278, 706, 785, 514]} cx={595} cy={963} tail={449} tailDir={-1} zTop={815} />
            <VSvg viewBox="278 706 785 514"><Cube cx={1008} cy={762} t="左" /><Tripod o={[306, 1196]} z={[306, 1172]} y={[290, 1190]} x={[312, 1190]} lz={[304, 1172]} ly={[281, 1198]} lx={[306, 1198]} /></VSvg>
            <ViewLabel>[+] [左 ] [标准 ] [线框 ]</ViewLabel>
          </ViewBox>
          <ViewBox $bg="linear-gradient(#1c1c1c,#4c4c4c)" $edge>
            <VPersp />
            <ViewLabel $b>[+] [透视 ] [标准 ] [默认明暗处理 ]</ViewLabel>
          </ViewBox>
        </VGrid>

        <Panel>
          <HGrip $ml={5} $w={292} />
          <PTabs>
            {TabIcons.map((ic, i) => <PTab key={i} $active={i === 0}>{ic}</PTab>)}
          </PTabs>
          <PBody>
            <SubIcons>
              {SubIconsArr.map((ic, i) => <SubIcon key={i} $active={i === 0}>{ic}</SubIcon>)}
            </SubIcons>
            <Combo>扩展基本体<Arrow /></Combo>
            <Scroller>
              <Rollouts>
                <Rollout $pb={0}>
                  <RollHead><RollTri />对象类型<RollDots /></RollHead>
                  <AutoRow><CheckBox />自动栅格</AutoRow>
                  <BtnGrid>
                    <PBtn $on>异面体</PBtn>
                    <PBtn>环形结</PBtn>
                    {BTNS.map((b, i) => <PBtn key={i}>{b}</PBtn>)}
                  </BtnGrid>
                </Rollout>
                <Rollout $pb={14}>
                  <RollHead><RollTri />名称和颜色<RollDots /></RollHead>
                  <NameRow><NameInput>Hedra001</NameInput><Swatch /></NameRow>
                </Rollout>
                <Rollout $pb={0}>
                  <RollHead><RollTri />参数<RollDots /></RollHead>
                  <Group $mt={15} $pt={10} $pb={13}>
                    <Legend>系列:</Legend>
                    {RADIOS.map((r, i) => <RadioRow key={i}><Radio $on={i === 0} /><RadioLabel>{r}</RadioLabel></RadioRow>)}
                  </Group>
                  <Group $mt={7} $pt={12} $pb={20}>
                    <Legend>系列参数:</Legend>
                    <Spin l="P" v="0.0" />
                    <Spin l="Q" v="0.0" mt={8} />
                  </Group>
                  <Group $mt={6} $pt={13} $pb={16}>
                    <Legend>轴向比率:</Legend>
                    <Spin l="P" v="100.0" />
                    <Spin l="Q" v="100.0" mt={9} />
                    <Spin l="R" v="100.0" mt={9} />
                    <ResetBtn>重置</ResetBtn>
                  </Group>
                  <Group $mt={6} $pt={12} $pb={20}>
                    <Legend>顶点</Legend>
                  </Group>
                </Rollout>
              </Rollouts>
              <Track />
            </Scroller>
          </PBody>
        </Panel>
      </Middle>

      <TimeRow>
        <VGrip $h={30} />
        <TBtn><Ic s={14} vb="0 0 14 14"><path d="M9 1 4 7l5 6" fill="none" stroke="#9a9a9a" /></Ic></TBtn>
        <TField>0 / 100</TField>
        <TBtn><Ic s={14} vb="0 0 14 14"><path d="M5 1l5 6-5 6" fill="none" stroke="#9a9a9a" /></Ic></TBtn>
      </TimeRow>
      <TrackRow>
        <TrackLeft>
          <Ic s={24} vb="0 0 24 24">
            <path d="M5 17C7 1 12 1 14 11s5 8 8 4" fill="none" stroke={T} strokeWidth="1.600" />
            <path d="M1 5h3M1 9h3M1 13h3M1 17h3" stroke={L} strokeWidth="2" />
          </Ic>
        </TrackLeft>
        <TrackRuler><Ruler /></TrackRuler>
      </TrackRow>

      <Status>
        <Prompt>
          <PromptPink />
          <PromptWhite>MAXScript 迷你</PromptWhite>
        </Prompt>
        <StatDiv />
        <StatRows>
          <StatRow $h={42}>
            <Msg $w={622}>选择了<Lat> 1 </Lat>个<Lat> </Lat>对象</Msg>
            <Slot $w={48}><Ic s={24}><path d="M10 4H3v7M30 4h7v7M10 36H3v-7M30 36h7v-7" stroke={L} fill="none" strokeWidth="2.500" /><rect x="10" y="10" width="20" height="20" fill={T} /></Ic></Slot>
            <Slot $w={32}><Ic s={26}><path d="M12 18v-8a8 8 0 0 1 16 0v8" fill="none" stroke="#8a8a8a" strokeWidth="2.500" /><rect x="8" y="17" width="24" height="22" rx="2" fill="#505050" stroke="#9a9a9a" strokeWidth="2" /><circle cx="20" cy="25" r="3" fill="#151515" /><rect x="18.500" y="26" width="3" height="8" fill="#151515" /></Ic></Slot>
            <Slot $w={48}><Ic s={24}><rect x="2" y="2" width="36" height="36" fill={L} /><path d="M20 2v36M2 20h36" stroke="#333" strokeWidth="3" /><circle cx="20" cy="20" r="8" fill={L} stroke="#333" strokeWidth="3" /></Ic></Slot>
            <CLabel>X:</CLabel><CField>-20.179</CField>
            <CLabel $ml={21}>Y:</CLabel><CField>3.065</CField>
            <CLabel $ml={20}>Z:</CLabel><CField $w={87}>0.0</CField>
            <GridText>栅格<Lat> = 10.0</Lat></GridText>
            <Slot $w={24}><Play d="M2 4h4v16H2zM7 12l7-8v16zM15 12l7-8v16z" /></Slot>
            <Slot $w={14}><VBar /></Slot>
            <Slot $w={24}><Play d="M1 12l7-8v16zM10 4h3v16h-3zM16 4h3v16h-3z" /></Slot>
            <Slot $w={42}><Ic s={30} vb="0 0 24 24"><path d="M4 1l17 11L4 23z" fill={L} /></Ic><Fly /></Slot>
            <Slot $w={24}><Play d="M4 4h3v16H4zM9 4h3v16H9zM14 4l8 8-8 8z" /></Slot>
            <Slot $w={14}><VBar /></Slot>
            <Slot $w={26}><Play d="M1 4l7 8-7 8zM9 4l7 8-7 8zM18 4h4v16h-4z" /></Slot>
            <NavSlots>
              <Slot $w={34}><Ic s={28}><rect x="14" y="2" width="12" height="12" fill={T} /><rect x="28" y="2" width="10" height="12" fill={T} /><rect x="28" y="16" width="10" height="12" fill={T} /><circle cx="15" cy="26" r="8" fill="none" stroke={L} strokeWidth="3" /><path d="M9 32l-8 7" stroke={L} strokeWidth="3" /></Ic></Slot>
              <Slot $w={35}><Ic s={28}><path d="M7 3H2v6M33 3h5v6M7 37H2v-6M33 37h5v-6" stroke={L} fill="none" strokeWidth="2" /><path d="M20 5l13 7v15l-13 8-13-8V12z" fill={T} /><path d="M20 5l13 7-13 8-13-8z" fill="#8ed6d6" /></Ic><Fly /></Slot>
              <Slot $w={37}><Ic s={28}><rect x="21" y="4" width="14" height="26" rx="6" fill={T} /><path d="M3 26l9-8 9 8-9 8z" fill={L} /><path d="M13 26l8 7-7 6-8-7z" fill={L} /></Ic><Fly /></Slot>
            </NavSlots>
          </StatRow>
          <StatRow $h={36}>
            <Msg $w={1098}>单击并拖动以开始创建过程</Msg>
            <TagIcon><Ic s={24}><path d="M20 3l15 9v16l-15 9-15-9V12z" fill="none" stroke="#e6e6e6" strokeWidth="2.500" /><path d="M5 12l15 9 15-9M20 21v16" fill="none" stroke="#e6e6e6" strokeWidth="2" /></Ic></TagIcon>
            <TagText>添加时间标记</TagText>
            <Slot $w={24}><Play d="M1 12l8-8v16zM13 4l8 8-8 8z" /></Slot>
            <Slot $w={8}><VBar /></Slot>
            <FrameField><Lat>0</Lat><SpinArrows style={{ paddingTop: 0 }}><Up $c="#aaa" /><Down $c="#aaa" /></SpinArrows></FrameField>
            <Slot $w={6}><VBar /></Slot>
            <Slot $w={26}><Ic s={24}><circle cx="15" cy="15" r="13" fill={L} /><path d="M15 6v10h7" stroke="#222" strokeWidth="2" fill="none" /><circle cx="27" cy="28" r="7" fill="none" stroke={O} strokeWidth="5" /></Ic></Slot>
            <NavSlots>
              <Slot $w={34}><Ic s={30}><path d="M9 22V8a2.500 2.500 0 0 1 5 0v10V4a2.500 2.500 0 0 1 5 0v14V5a2.500 2.500 0 0 1 5 0v14V9a2.500 2.500 0 0 1 5 0v16c0 8-4 12-10 12s-9-4-11-9l-4-7c-1-3 3-4 5-1z" fill={L} /></Ic><Fly /></Slot>
              <Slot $w={35}><Ic s={30}><circle cx="20" cy="20" r="13" fill={L} /><path d="M20 20V7a13 13 0 0 1 13 13z" fill={T} /><path d="M20 20H7a13 13 0 0 0 13 13z" fill={T} /><ellipse cx="20" cy="20" rx="20" ry="7" transform="rotate(-35 20 20)" fill="none" stroke={L} strokeWidth="2" /></Ic><Fly /></Slot>
              <Slot $w={37}><Ic s={28}><rect x="2" y="2" width="36" height="36" fill={L} /><rect x="5" y="5" width="30" height="30" fill={D} /><rect x="5" y="20" width="15" height="15" fill={L} /><path d="M19 21 33 7M25 7h8v8" stroke={L} strokeWidth="3" fill="none" /></Ic></Slot>
            </NavSlots>
          </StatRow>
        </StatRows>
      </Status>

      <Taskbar>
        <StartBtn>
          <Ic s={26} vb="0 0 26 26"><path d="M1 4l10-1.500V12H1zM13 2.200l12-1.800V12H13zM1 14h10v9.500L1 22zM13 14h12v11.600l-12-1.800z" fill="#fff" /></Ic>
        </StartBtn>
        <Search>
          <Ic s={34} vb="0 0 34 34"><circle cx="17" cy="17" r="13.500" fill="none" stroke="#111" strokeWidth="4" /></Ic>
          <SearchText>在这里输入你要搜索的内容</SearchText>
          <Ic s={26} vb="0 0 26 26"><rect x="9" y="1" width="8" height="16" rx="4" fill="none" stroke="#333" strokeWidth="1.500" /><path d="M5 11a8 8 0 0 0 16 0M13 19v4M8 24h10" fill="none" stroke="#333" strokeWidth="1.500" /></Ic>
        </Search>
        <TaskView>
          <Ic s={30} vb="0 0 30 30"><path d="M4 4h16M4 8h16M4 26h16M4 22h16M6 12h12v6H6z" fill="none" stroke="#eee" strokeWidth="1.300" /><path d="M25 3v6M25 21v6" stroke="#eee" strokeWidth="1.300" /><rect x="23.500" y="13" width="3" height="3" fill="#eee" /></Ic>
        </TaskView>
        <TaskTab $w={228} $ml={12}>
          <Ic s={30} vb="0 0 30 30"><path d="M6 0h6l10 3v20H12v7L6 25z" fill="#f8cf6c" /><path d="M6 0h6v30L6 25z" fill="#e0a93a" /></Ic>
          <span style={{ marginLeft: 5 }}>屏幕截图</span>
        </TaskTab>
        <MailSlot>
          <Ic s={40} vb="0 0 40 40"><path d="M3 14 20 2l17 12v22H3z" fill="#1b87d5" /><path d="M3 14l17 13 17-13v22H3z" fill="#39b3f0" /><path d="M7 14h26L20 24z" fill="#e8f4fb" /></Ic>
        </MailSlot>
        <TaskTab $w={227} $ml={3}>
          <Ic s={38} vb="0 0 38 38"><circle cx="19" cy="19" r="18" fill="#1c69b8" /><path d="M2 18C4 6 12 1 20 1c9 0 17 6 17 15 0 5-4 7-9 7-4 0-6-1-6-3 0-4 5-4 3-8-2-3-8-4-13-1S5 15 2 18z" fill="#3fd08a" /><path d="M24 24c-5 5-12 6-14-3-1-4 1-7 4-8-6 6-1 13 10 11z" fill="#0b3a80" /></Ic>
          高级编辑器_百度经...
        </TaskTab>
        <TaskTab $w={240} $ml={9} $pl={15} $on>
          <Ic s={36} vb="0 0 24 24"><rect width="24" height="24" fill="#d9eeee" /><text x="12" y="18" textAnchor="middle" fontFamily="Liberation Sans" fontWeight="700" fontSize="21" fill="#1f8c8c">3</text><text x="8" y="23" fontFamily="Liberation Sans" fontSize="4" fill="#2a9a9a">MAX</text></Ic>
          <span>无标题 - Autodesk...</span>
        </TaskTab>
        <Ime>
          <ImeTop>
            <ImePin>拼</ImePin>
            <span>中</span>
            <Ic s={24} vb="0 0 24 24"><path d="M12 2a10 10 0 1 1-9 15c8 2 13-7 9-15z" fill="none" stroke="#eee" strokeWidth="1.500" /></Ic>
            <span>,</span>
            <span>简</span>
          </ImeTop>
          <ImeGear>
            <Ic s={26} vb="0 0 40 40"><circle cx="20" cy="20" r="7" fill="none" stroke="#ddd" strokeWidth="2.500" /><circle cx="20" cy="20" r="15" fill="none" stroke="#ddd" strokeWidth="5" strokeDasharray="6 5.800" /><circle cx="20" cy="20" r="13" fill="none" stroke="#ddd" strokeWidth="2" /></Ic>
          </ImeGear>
        </Ime>
        <TrayIcons>
          <TrayIcon><Ic s={24} vb="0 0 24 24"><path d="M3 17 12 6l9 11" fill="none" stroke="#ddd" strokeWidth="1.500" /></Ic></TrayIcon>
          <TrayIcon><Ic s={26} vb="0 0 26 26"><path d="M4 20c-5-1-4-8 1-8 2-6 11-6 13-1 5 0 7 5 4 9z" fill="#eee" /></Ic></TrayIcon>
          <TrayIcon><Ic s={26} vb="0 0 26 26"><rect x="3" y="6" width="21" height="14" fill="none" stroke="#eee" strokeWidth="1.300" /><rect x="5" y="8" width="16" height="10" fill="#eee" /></Ic></TrayIcon>
          <TrayIcon><Ic s={26} vb="0 0 26 26"><path d="M7 3h6v6H7zM10 9v8M2 17h22M13 17v5M8 22h10M22 8v9" fill="none" stroke="#eee" strokeWidth="1.300" /></Ic></TrayIcon>
          <TrayIcon><Ic s={26} vb="0 0 26 26"><path d="M3 10h4l6-6v18l-6-6H3z" fill="none" stroke="#ddd" strokeWidth="1.300" /><path d="M16 9a5 5 0 0 1 0 8M19 7a8 8 0 0 1 0 12" fill="none" stroke="#aaa" strokeWidth="1.300" /></Ic></TrayIcon>
        </TrayIcons>
        <DateText>2020/6/10</DateText>
        <ImLogo>
          <Ic s={36} vb="0 0 36 36"><path d="M1 7h5v24H1zM9 31V7h5l5 12 5-14 5-2v28h-4V14l-5 14h-3l-4-12v15z" fill="#eee" /></Ic>
        </ImLogo>
        <Notify>
          <Ic s={28} vb="0 0 28 28"><path d="M2 0h24v20H16l-4 5v-5H2z" fill="#f2f2f2" /><path d="M6 6h16M6 10h16M6 14h11" stroke="#333" strokeWidth="1.300" /></Ic>
          <NotifyBadge>1</NotifyBadge>
        </Notify>
        <EdgeLine />
      </Taskbar>

      <Paw $x={1818} $y={1212} $w={27} $h={40} />
      <Paw $x={1851} $y={1214} $w={30} $h={40} />
      <Paw $x={1795} $y={1238} $w={22} $h={20} />
      <Ghost />
      <GhostB><GhostHole /><GhostHole /></GhostB>
      <GhostBar /><GhostCross />
      <GhostJin>jin</GhostJin>
      <GhostKey>
        <Ic s={22} vb="0 0 22 22"><path d="M3 20 14 8M10 12l3 3M7 15l3 3" stroke={T} strokeWidth="2.500" fill="none" /><circle cx="17" cy="5" r="4" fill="none" stroke={T} strokeWidth="2.500" /></Ic>
      </GhostKey>
      <Mark>
        <Ic s={70} vb="0 0 66 86">
          <path d="M22 4c-4-3-10 0-12 4C4 18 1 30 1 43s3 25 9 35c4 6 11 4 14-1" fill="none" stroke="#c8cbd3" strokeWidth="5" strokeLinecap="round" />
          <path d="M22 4 60 33c7 5 7 15 0 20L24 80c-4 3-9 1-9-5V22" fill="none" stroke="#c8cbd3" strokeWidth="5" strokeLinejoin="round" strokeLinecap="round" />
          <path d="M26 33l15 10-15 10z" fill="#aab0bd" />
          <rect x="43" y="35" width="3" height="16" fill="#aab0bd" />
        </Ic>
        <MarkText>
          <MarkCn>溜溜自学</MarkCn>
          <MarkEn>ZIXUE.3D66.COM</MarkEn>
        </MarkText>
      </Mark>
    </App_>
  );
}
